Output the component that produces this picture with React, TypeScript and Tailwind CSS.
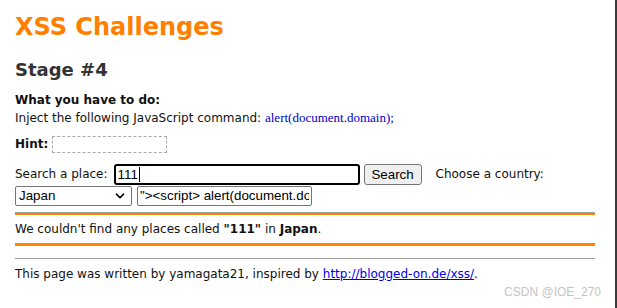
import { ChevronDown } from "lucide-react";

const body = "font-['DejaVu_Sans',Verdana,sans-serif] text-[12px] text-[#111]";
const ctrl = "font-['Liberation_Sans',Arial,sans-serif] text-[13.33px] text-black";

function Rule() {
  return (
    <div className="w-[580px]">
      <div className="h-px bg-[#9a9a9a]" />
      <div className="h-[2px] bg-[#ff8400]" />
    </div>
  );
}

export default function App() {
  return (
    <div className="relative min-h-screen w-[617px] border-r-2 border-[#3a3a3a] bg-white pl-[15px]">
      {/* ═══════════ HEADINGS ═══════════ */}
      <h1 className="pt-[13px] font-['DejaVu_Sans',Verdana,sans-serif] text-[24px] font-bold leading-[28px] text-[#ff8000]">
        XSS Challenges
      </h1>
      <h2 className="mt-[18px] font-['DejaVu_Sans',Verdana,sans-serif] text-[18px] font-bold leading-[22px] text-[#333]">
        Stage #4
      </h2>

      <div className={`mt-[11px] leading-[17px] ${body}`}>
        <p className="font-bold">What you have to do:</p>
        <p>
          Inject the following JavaScript command:{" "}
          <span className="font-['Liberation_Serif','Times_New_Roman',serif] text-[13px] text-[#0000cc]">
            alert(document.domain);
          </span>
        </p>
      </div>

      {/* ═══════════ HINT ═══════════ */}
      <div className={`mt-[9px] flex h-[17px] items-center gap-[4px] leading-[17px] ${body}`}>
        <span className="font-bold">Hint:</span>
        <span className="h-[17px] w-[115px] border border-dashed border-[#aaa]" />
      </div>

      {/* ═══════════ FORM ═══════════ */}
      <div className={`mt-[11px] flex h-[21px] items-center leading-[17px] ${body}`}>
        <span>Search a place:</span>
        <div className={`ml-[6px] flex h-[21px] w-[246px] items-center rounded-[3px] border-2 border-black px-[2px] ${ctrl}`}>
          111
          <span className="ml-px h-[15px] w-px bg-black" />
        </div>
        <button
          className={`ml-[4px] h-[21px] w-[58px] rounded-[3px] border border-[#767676] bg-[#efefef] ${ctrl}`}
        >
          Search
        </button>
        <span className="ml-[14px]">Choose a country:</span>
      </div>

      <div className="flex h-[21px] items-center gap-[5px]">
        <div className={`flex h-[20px] w-[117px] items-center justify-between rounded-[2px] border border-[#767676] pl-[3px] pr-[4px] ${ctrl}`}>
          <span>Japan</span>
          <ChevronDown size={14} strokeWidth={3} />
        </div>
        <input
          readOnly
          value={'"><script> alert(document.domain);</script>'}
          className={`h-[20px] w-[175px] rounded-[2px] border border-[#767676] px-[2px] outline-none ${ctrl}`}
        />
      </div>

      {/* ═══════════ RESULT ═══════════ */}
      <div className="mt-[6px]">
        <Rule />
      </div>
      <p className={`pb-[5px] pt-[6px] leading-[17px] ${body}`}>
        We couldn't find any places called <b>"111"</b> in <b>Japan</b>.
      </p>
      <Rule />

      {/* ═══════════ FOOTER ═══════════ */}
      <div className="mt-[12px] h-px w-[580px] bg-[#a0a0a0]" />
      <p className={`mt-[7px] leading-[17px] ${body}`}>
        This page was written by yamagata21, inspired by{" "}
        <a href="#" className="text-[#0000ee] underline">
          http://blogged-on.de/xss/
        </a>
        .
      </p>

      <span className="absolute bottom-[9px] right-[14px] font-['Liberation_Sans',Arial,sans-serif] text-[12px] leading-[14px] text-[#c4c4c4]">
        CSDN @IOE_270
      </span>
    </div>
  );
}
